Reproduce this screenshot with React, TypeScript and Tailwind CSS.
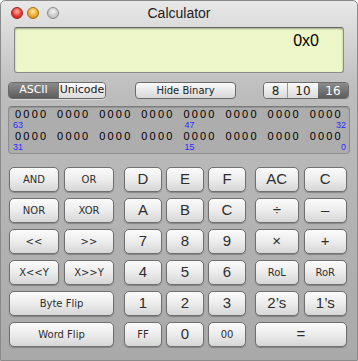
import React from "react";

const btn =
  "flex items-center justify-center rounded-[5px] border border-[#6f6f6f] bg-gradient-to-b from-[#fbfbfb] via-[#ececec] to-[#d6d6d6] shadow-[0_1px_1px_rgba(0,0,0,0.25)] text-[#2e2e2e] h-[25px]";

function Btn({ label, big, span }: { label: string; big?: boolean; span?: boolean }) {
  return (
    <div
      className={
        btn +
        (span ? " col-span-2" : "") +
        (big ? " text-[15px]" : " text-[10px]")
      }
      style={{ fontFamily: big ? "'Liberation Sans', Arial, sans-serif" : "'DejaVu Sans', 'Liberation Sans', sans-serif" }}
    >
      {label}
    </div>
  );
}

export default function App() {
  const groups = Array.from({ length: 8 });
  return (
    <div
      className="w-[358px] h-[361px] overflow-hidden bg-white"
      style={{ fontFamily: "'Liberation Sans', Arial, sans-serif" }}
    >
      <div className="w-[358px] h-[361px] rounded-t-[5px] border border-[#8a8a8a] bg-gradient-to-b from-[#e8e8e8] via-[#bdbdbd] via-[25%] to-[#a9a9a9] flex flex-col">
        {/* title bar */}
        <div className="h-[21px] grid grid-cols-[1fr_auto_1fr] items-center">
          <div className="flex items-center pl-[10px] pt-[2px]">
            <div className="w-[12px] h-[12px] rounded-full border border-[#a02020] bg-[radial-gradient(circle_at_50%_35%,#ffb0a8,#e0332b_60%,#b01a14)]" />
            <div className="w-[12px] h-[12px] rounded-full border border-[#a27010] bg-[radial-gradient(circle_at_50%_35%,#ffe9a0,#eba42a_60%,#c07a10)] ml-[4px]" />
            <div className="w-[12px] h-[12px] rounded-full border border-[#8a8a8a] bg-[radial-gradient(circle_at_50%_35%,#f4f4f4,#c8c8c8_60%,#a8a8a8)] ml-[8px]" />
          </div>
          <div className="text-[14px] text-[#222] pt-[3px] leading-[16px]">Calculator</div>
          <div />
        </div>

        {/* display */}
        <div className="mt-[5px] mx-[13px] h-[46px] rounded-[3px] border border-[#8a8a8a] border-t-[#666] bg-[#eef7c9] shadow-[inset_0_1px_2px_rgba(0,0,0,0.35)] flex justify-end pr-[24px] pt-[4px]">
          <span className="text-[16px] leading-[18px] text-black">0x0</span>
        </div>

        {/* controls row */}
        <div className="mt-[9px] flex items-center h-[17px] pl-[7px]">
          <div
            className="flex h-[17px] w-[98px] rounded-[4px] border border-[#6a6a6a] overflow-hidden text-[11px] shadow-[0_1px_0_rgba(255,255,255,0.4)]"
            style={{ fontFamily: "'DejaVu Sans', sans-serif" }}
          >
            <div className="w-[49px] flex items-center justify-center bg-gradient-to-b from-[#8c8c8c] to-[#5c5c5c] text-white">ASCII</div>
            <div className="flex-1 flex items-center justify-center bg-gradient-to-b from-[#fafafa] to-[#dadada] text-[#222] border-l border-[#777]">Unicode</div>
          </div>
          <div
            className="ml-[29px] h-[17px] w-[101px] rounded-[4px] border border-[#6a6a6a] bg-gradient-to-b from-[#fafafa] to-[#d8d8d8] flex items-center justify-center text-[10px] text-[#222]"
            style={{ fontFamily: "'DejaVu Sans', sans-serif" }}
          >
            Hide Binary
          </div>
          <div
            className="ml-[27px] flex h-[17px] w-[86px] rounded-[4px] border border-[#6a6a6a] overflow-hidden text-[12px]"
            style={{ fontFamily: "'DejaVu Sans', sans-serif" }}
          >
            <div className="w-[23px] flex items-center justify-center bg-gradient-to-b from-[#fafafa] to-[#dadada] text-[#222]">8</div>
            <div className="w-[31px] flex items-center justify-center bg-gradient-to-b from-[#fafafa] to-[#dadada] text-[#222] border-l border-[#999]">10</div>
            <div className="flex-1 flex items-center justify-center bg-gradient-to-b from-[#8c8c8c] to-[#5c5c5c] text-white">16</div>
          </div>
        </div>

        {/* binary panel */}
        <div className="mt-[7px] mx-[7px] h-[48px] rounded-[4px] border border-[#8e8e8e] border-t-[#7a7a7a] bg-[#adadad] shadow-[inset_0_1px_1px_rgba(0,0,0,0.15)] pt-[2px]">
          {[
            ["63", "47", "32"],
            ["31", "15", "0"],
          ].map((labels, r) => (
            <div key={r}>
              <div className="flex justify-between px-[6px] h-[11px] leading-[11px] text-[11px] text-black">
                {groups.map((_, i) => (
                  <span key={i} className="tracking-[2.2px]">0000</span>
                ))}
              </div>
              <div className="grid grid-cols-2 h-[11px] leading-[11px] text-[9px] text-[#2a2aff] pl-[4px] pr-[3px]">
                <span>{labels[0]}</span>
                <div className="flex justify-between pl-[5px]">
                  <span>{labels[1]}</span>
                  <span>{labels[2]}</span>
                </div>
              </div>
            </div>
          ))}
        </div>

        {/* keypad */}
        <div className="mt-[13px] flex pl-[8px]">
          <div className="grid grid-cols-2 gap-x-[5px] gap-y-[6px] w-[105px]">
            <Btn label="AND" />
            <Btn label="OR" />
            <Btn label="NOR" />
            <Btn label="XOR" />
            <Btn label="<<" />
            <Btn label=">>" />
            <Btn label="X<<Y" />
            <Btn label="X>>Y" />
            <Btn label="Byte Flip" span />
            <Btn label="Word Flip" span />
          </div>
          <div className="grid grid-cols-3 gap-x-[4px] gap-y-[6px] w-[122px] ml-[10px]">
            {["D", "E", "F", "A", "B", "C", "7", "8", "9", "4", "5", "6", "1", "2", "3"].map((k) => (
              <Btn key={k} label={k} big />
            ))}
            <Btn label="FF" />
            <Btn label="0" big />
            <Btn label="00" />
          </div>
          <div className="grid grid-cols-2 gap-x-[5px] gap-y-[6px] w-[92px] ml-[9px]">
            <Btn label="AC" big />
            <Btn label="C" big />
            <Btn label="÷" big />
            <Btn label="–" big />
            <Btn label="×" big />
            <Btn label="+" big />
            <Btn label="RoL" />
            <Btn label="RoR" />
            <Btn label="2’s" big />
            <Btn label="1’s" big />
            <Btn label="=" span big />
          </div>
        </div>
      </div>
    </div>
  );
}
